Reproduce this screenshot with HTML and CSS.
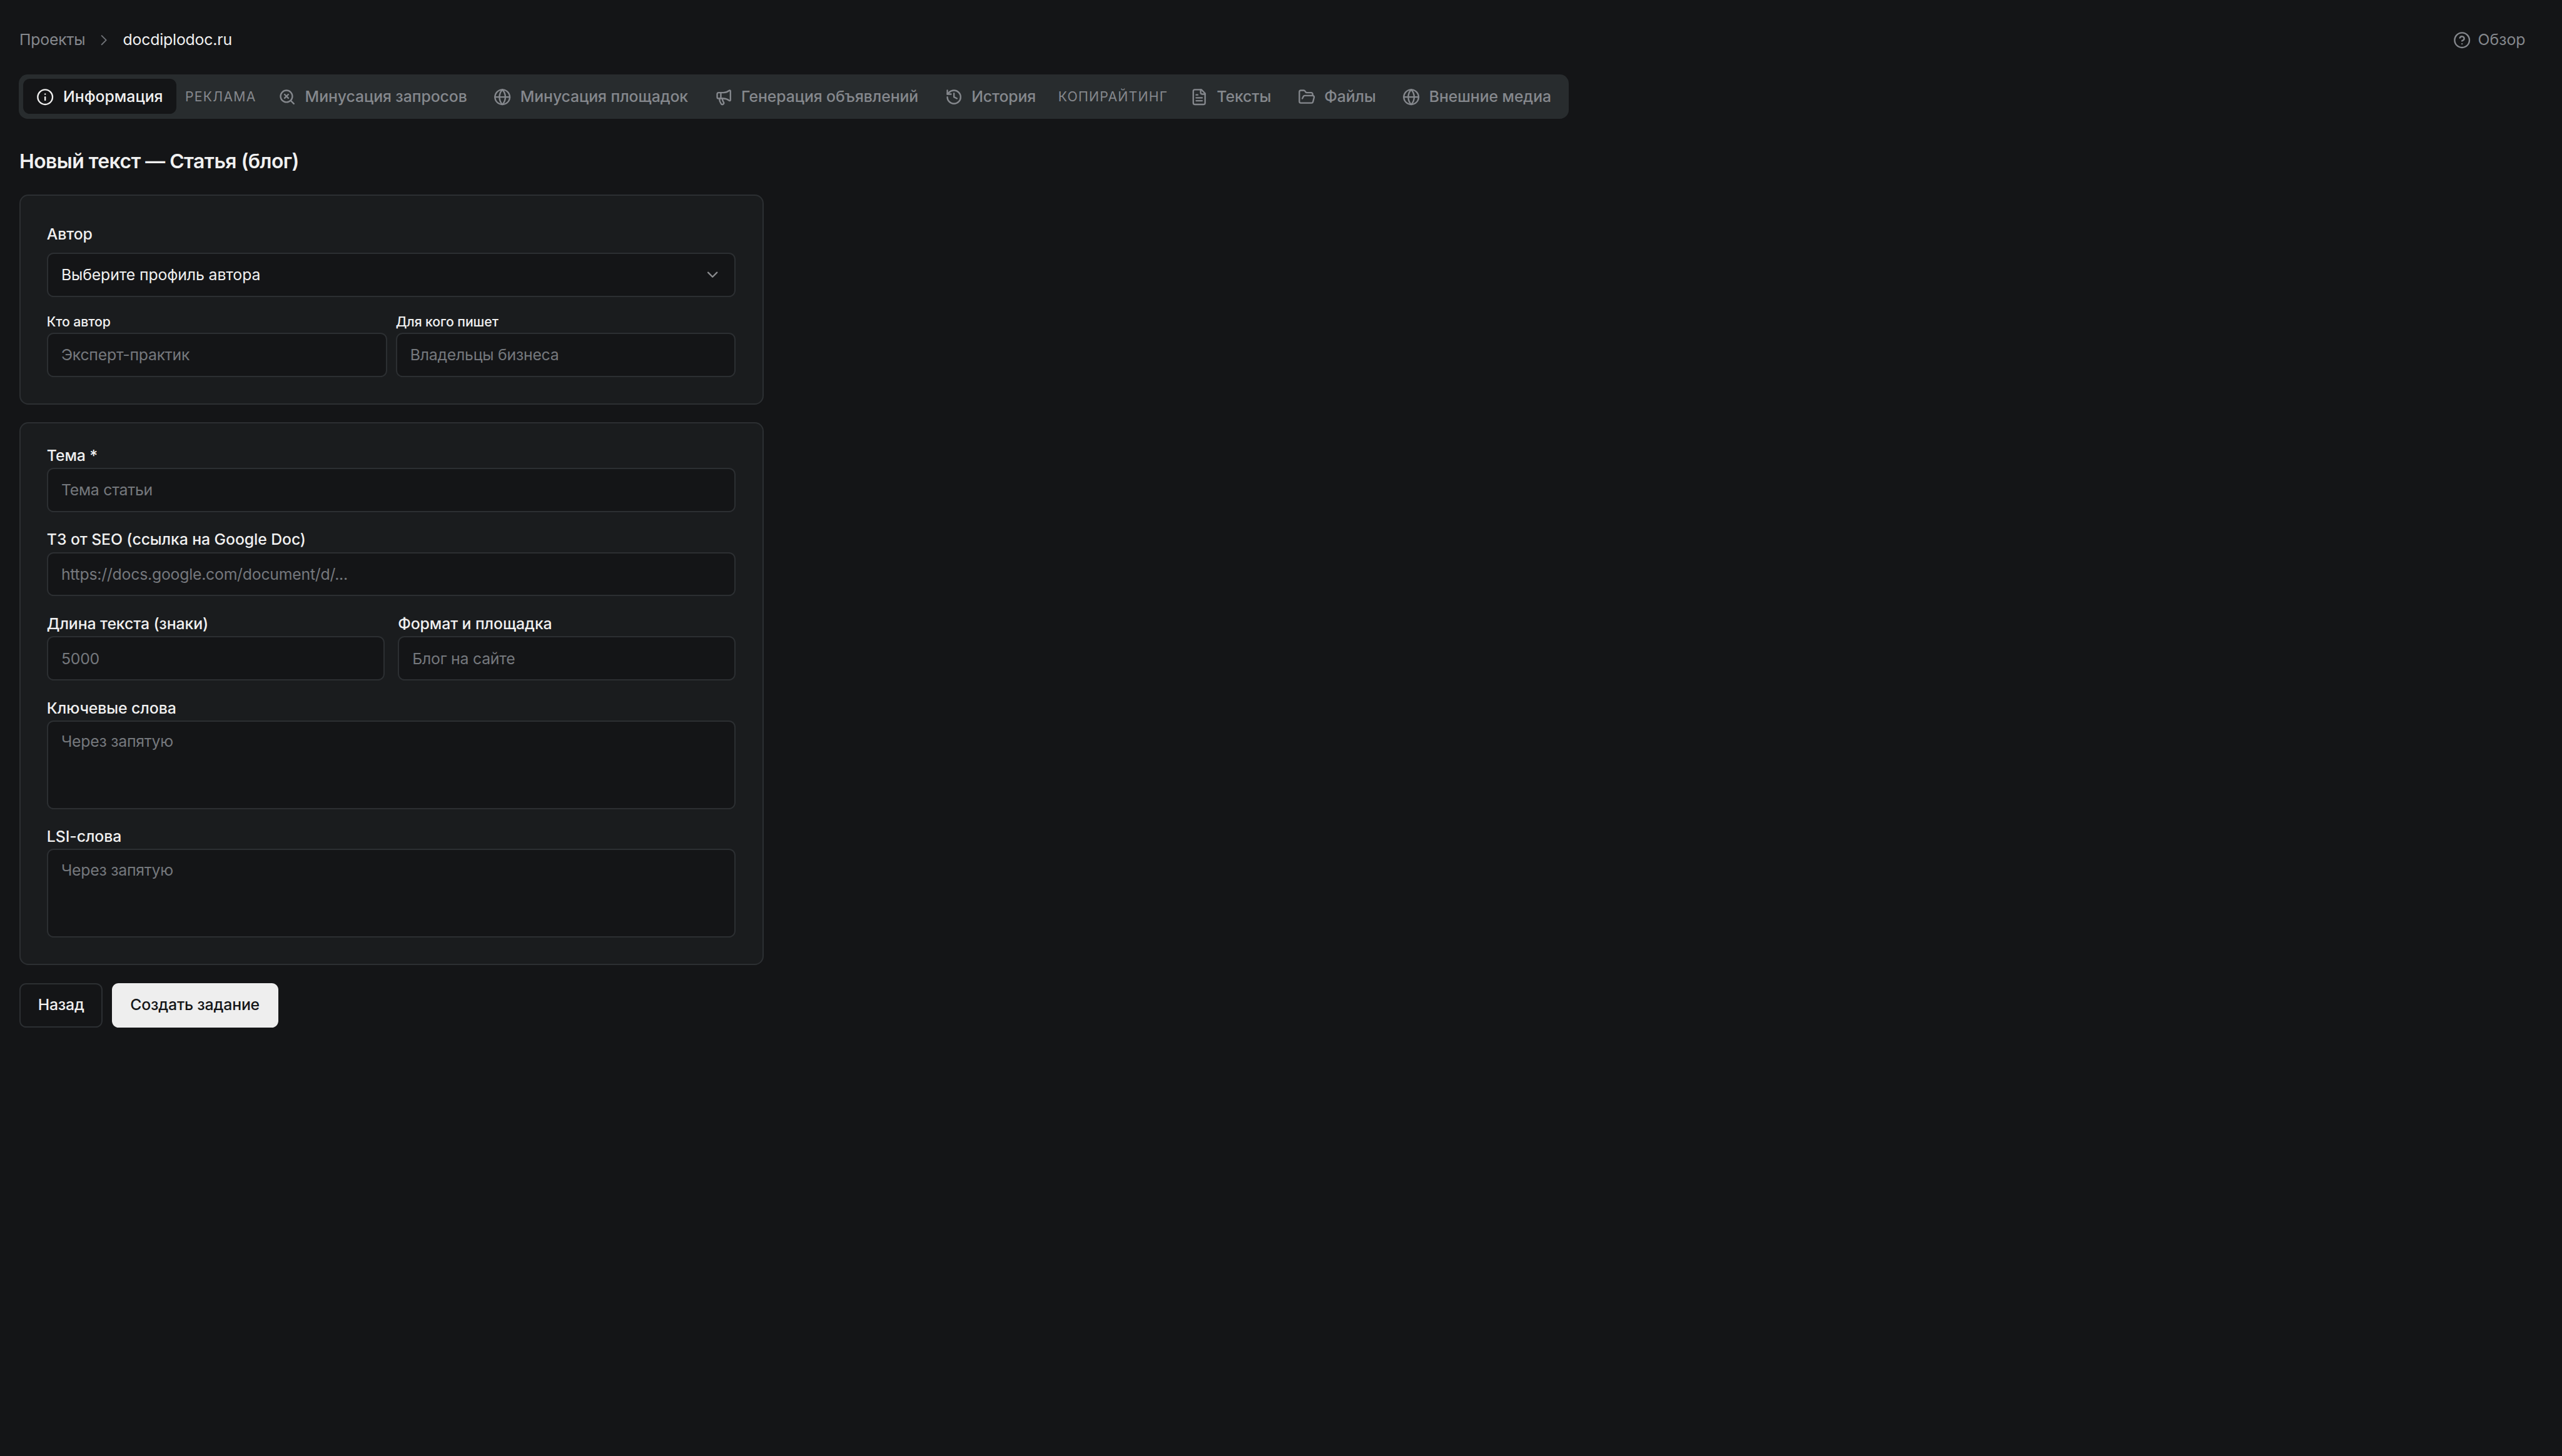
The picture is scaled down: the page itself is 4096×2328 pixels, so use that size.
FILE: index.html
```html
<!DOCTYPE html>
<html lang="ru">
<head>
<meta charset="utf-8">
<title>Новый текст — Статья (блог)</title>
<link rel="stylesheet" href="styles.css">
</head>
<body>
<header class="topbar">
  <nav class="crumbs">
    <a class="crumb">Проекты</a>
    <svg class="icon crumb-sep" viewBox="0 0 24 24"><path d="m9 18 6-6-6-6"/></svg>
    <span class="crumb-current">docdiplodoc.ru</span>
  </nav>
  <a class="overview">
    <svg class="icon" viewBox="0 0 24 24"><circle cx="12" cy="12" r="10"/><path d="M9.09 9a3 3 0 0 1 5.83 1c0 2-3 3-3 3"/><path d="M12 17h.01"/></svg>
    Обзор
  </a>
</header>
<main class="page">
  <div class="tabs">
    <a class="tab tab-active"><svg class="icon" viewBox="0 0 24 24"><circle cx="12" cy="12" r="10"/><path d="M12 16v-4"/><path d="M12 8h.01"/></svg>Информация</a>
    <span class="tab-group">Реклама</span>
    <a class="tab"><svg class="icon" viewBox="0 0 24 24"><path d="m13.5 8.5-5 5"/><path d="m8.5 8.5 5 5"/><circle cx="11" cy="11" r="8"/><path d="m21 21-4.3-4.3"/></svg>Минусация запросов</a>
    <a class="tab"><svg class="icon" viewBox="0 0 24 24"><circle cx="12" cy="12" r="10"/><path d="M12 2a14.5 14.5 0 0 0 0 20 14.5 14.5 0 0 0 0-20"/><path d="M2 12h20"/></svg>Минусация площадок</a>
    <a class="tab"><svg class="icon" viewBox="0 0 24 24"><path d="M11 6a13 13 0 0 0 8.4-2.8A1 1 0 0 1 21 4v12a1 1 0 0 1-1.6.8A13 13 0 0 0 11 14H5a2 2 0 0 1-2-2V8a2 2 0 0 1 2-2z"/><path d="M6 14a12 12 0 0 0 2.4 7.2 2 2 0 0 0 3.2-2.4A8 8 0 0 1 10 14"/><path d="M8 6v8"/></svg>Генерация объявлений</a>
    <a class="tab"><svg class="icon" viewBox="0 0 24 24"><path d="M3 12a9 9 0 1 0 9-9 9.75 9.75 0 0 0-6.74 2.74L3 8"/><path d="M3 3v5h5"/><path d="M12 7v5l4 2"/></svg>История</a>
    <span class="tab-group">Копирайтинг</span>
    <a class="tab"><svg class="icon" viewBox="0 0 24 24"><path d="M15 2H6a2 2 0 0 0-2 2v16a2 2 0 0 0 2 2h12a2 2 0 0 0 2-2V7Z"/><path d="M14 2v4a2 2 0 0 0 2 2h4"/><path d="M10 9H8"/><path d="M16 13H8"/><path d="M16 17H8"/></svg>Тексты</a>
    <a class="tab"><svg class="icon" viewBox="0 0 24 24"><path d="m6 14 1.5-2.9A2 2 0 0 1 9.24 10H20a2 2 0 0 1 1.94 2.5l-1.54 6a2 2 0 0 1-1.95 1.5H4a2 2 0 0 1-2-2V5a2 2 0 0 1 2-2h3.9a2 2 0 0 1 1.69.9l.81 1.2a2 2 0 0 0 1.69.9H18a2 2 0 0 1 2 2v2"/></svg>Файлы</a>
    <a class="tab"><svg class="icon" viewBox="0 0 24 24"><circle cx="12" cy="12" r="10"/><path d="M12 2a14.5 14.5 0 0 0 0 20 14.5 14.5 0 0 0 0-20"/><path d="M2 12h20"/></svg>Внешние медиа</a>
  </div>

  <h1 class="title">Новый текст — Статья (блог)</h1>

  <section class="card card-author">
    <label class="label label-author">Автор</label>
    <button class="select" type="button">
      <span>Выберите профиль автора</span>
      <svg class="icon select-arrow" viewBox="0 0 24 24"><path d="m6 9 6 6 6-6"/></svg>
    </button>
    <div class="row row-narrow">
      <div class="field">
        <label class="label-small">Кто автор</label>
        <input class="input" placeholder="Эксперт-практик">
      </div>
      <div class="field">
        <label class="label-small">Для кого пишет</label>
        <input class="input" placeholder="Владельцы бизнеса">
      </div>
    </div>
  </section>

  <section class="card card-main">
    <div class="field">
      <label class="label">Тема *</label>
      <input class="input" placeholder="Тема статьи">
    </div>
    <div class="field">
      <label class="label">ТЗ от SEO (ссылка на Google Doc)</label>
      <input class="input" placeholder="https://docs.google.com/document/d/...">
    </div>
    <div class="row">
      <div class="field">
        <label class="label">Длина текста (знаки)</label>
        <input class="input" placeholder="5000">
      </div>
      <div class="field">
        <label class="label">Формат и площадка</label>
        <input class="input" placeholder="Блог на сайте">
      </div>
    </div>
    <div class="field">
      <label class="label">Ключевые слова</label>
      <textarea class="input textarea" placeholder="Через запятую"></textarea>
    </div>
    <div class="field">
      <label class="label">LSI-слова</label>
      <textarea class="input textarea" placeholder="Через запятую"></textarea>
    </div>
  </section>

  <div class="actions">
    <button class="btn btn-ghost" type="button">Назад</button>
    <button class="btn btn-primary" type="button">Создать задание</button>
  </div>
</main>
</body>
</html>
```
FILE: styles.css
```css
* { box-sizing: border-box; }
html {
  zoom: 1.772;
  background: #141517;
}
body {
  margin: 0;
  min-height: 1314px;
  background: #141517;
  color: #f0f0f0;
  font-family: Inter, "Liberation Sans", sans-serif;
  font-size: 14px;
  line-height: 20px;
}
.icon {
  width: 16px;
  height: 16px;
  flex: none;
  fill: none;
  stroke: currentColor;
  stroke-width: 2;
  stroke-linecap: round;
  stroke-linejoin: round;
}
.topbar {
  display: flex;
  align-items: center;
  justify-content: space-between;
  height: 36px;
  margin-top: 18px;
  padding: 0 33px 0 17.5px;
}
.crumbs { display: flex; align-items: center; gap: 9px; letter-spacing: -0.1px; }
.crumb { color: #85888d; }
.crumb-sep { color: #6f7277; stroke-width: 1.6; }
.crumb-current { color: #f0f0f0; }
.overview { display: flex; align-items: center; gap: 6.5px; color: #85888d; }
.page { padding: 13px 17.5px 0; }
.tabs {
  display: flex;
  align-items: center;
  width: fit-content;
  height: 40px;
  margin-left: -0.5px;
  padding: 4px;
  border-radius: 8px;
  background: #282c2e;
}
.tab {
  display: flex;
  align-items: center;
  gap: 8px;
  height: 32px;
  padding: 1px 12px 0;
  border-radius: 6px;
  color: #85888d;
  font-weight: 500;
  letter-spacing: -0.05px;
  white-space: nowrap;
}
.tab-active { background: #141517; color: #f0f0f0; letter-spacing: 0; }
.tab-group {
  padding: 1px 8px 0;
  color: #85888d;
  font-size: 12px;
  font-weight: 400;
  letter-spacing: 0.7px;
  text-transform: uppercase;
  white-space: nowrap;
}
.title {
  height: 28px;
  margin: 24.5px 0 15.8px;
  color: #f0f0f0;
  font-size: 18px;
  line-height: 28px;
  font-weight: 600;
  letter-spacing: -0.3px;
}
.card {
  width: 671.5px;
  border: 1.13px solid #2c2f32;
  border-radius: 8px;
  background: #1a1c1e;
}
.card-author { padding: 24.87px 24px 23.87px 23.6px; }
.card-main {
  display: flex;
  flex-direction: column;
  gap: 15px;
  margin-top: 16px;
  padding: 18.9px 24px 23.87px 23.6px;
}
.label {
  display: block;
  height: 20px;
  margin-bottom: 1px;
  font-weight: 500;
  letter-spacing: -0.05px;
  color: #f0f0f0;
}
.label-author { margin-bottom: 6.7px; }
.label-small {
  display: block;
  height: 16px;
  margin-bottom: 1.7px;
  font-size: 12px;
  line-height: 16px;
  font-weight: 500;
  letter-spacing: -0.05px;
  color: #f0f0f0;
}
.field { display: block; min-width: 0; }
.row { display: grid; grid-template-columns: 1fr 1fr; gap: 12px; }
.row-narrow { gap: 8px; margin-top: 14.4px; }
.input, .select {
  display: block;
  width: 100%;
  height: 40px;
  padding: 0 11.9px;
  border: 1.13px solid #2c2f32;
  border-radius: 6px;
  background: #141517;
  color: #f0f0f0;
  font: inherit;
  letter-spacing: -0.13px;
  outline: none;
}
.input::placeholder { color: #75787d; opacity: 1; }
.select {
  display: flex;
  align-items: center;
  justify-content: space-between;
  letter-spacing: -0.06px;
  text-align: left;
}
.select-arrow { color: #8a8b8e; }
.textarea { height: 80px; padding: 8px 11.9px; resize: none; }
.actions { display: flex; gap: 8px; margin-top: 16px; }
.btn {
  height: 40px;
  padding: 0 15.6px;
  border: 1.13px solid #2c2f32;
  border-radius: 6px;
  font: inherit;
  font-weight: 500;
  letter-spacing: -0.1px;
}
.btn-ghost { background: #141517; color: #f0f0f0; }
.btn-primary { border-color: #eeeeee; background: #eeeeee; color: #141517; }
```
